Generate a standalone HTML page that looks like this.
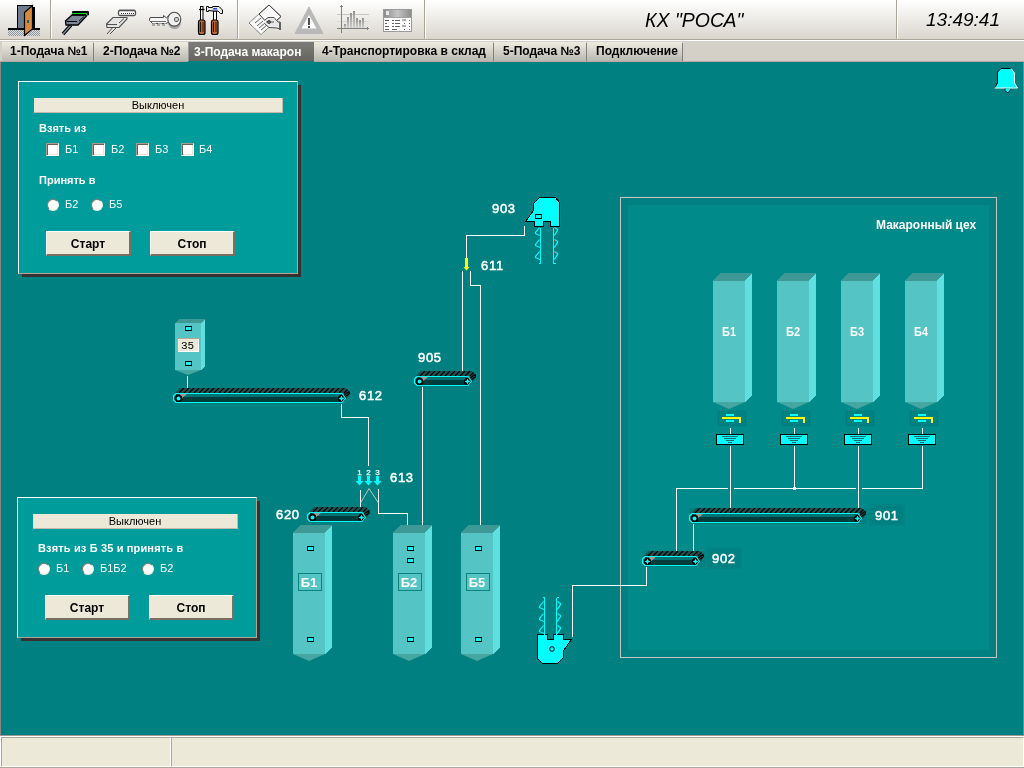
<!DOCTYPE html>
<html><head><meta charset="utf-8">
<style>
*{margin:0;padding:0;box-sizing:border-box}
html,body{width:1024px;height:768px;overflow:hidden;background:#D4D0C8;font-family:"Liberation Sans",sans-serif;position:relative}
.a{position:absolute}
#tb{left:0;top:0;width:1024px;height:39px;background:linear-gradient(#FFFFFF,#DAD6CE)}
.vs{position:absolute;top:0;width:1px;height:39px;background:#A8A496}
.vw{position:absolute;top:0;width:1px;height:39px;background:#FFFFFF}
#tl1{left:0;top:39px;width:1024px;height:1px;background:#ACA899}
#tl2{left:0;top:40px;width:1024px;height:1px;background:#FFFFFF}
#tabs{left:0;top:41px;width:1024px;height:21px;background:#D4D0C8}
.tab{position:absolute;top:42px;height:19px;background:linear-gradient(#EFECDF,#B9B8B1);font-weight:bold;font-size:12px;color:#000;line-height:19px;white-space:nowrap}
.tsep{position:absolute;top:43px;width:1px;height:18px;background:#808080}
#main{left:0;top:62px;width:1024px;height:674px;background:#008080}
.pnl{position:absolute;background:#009B9B;border-top:1px solid #fff;border-left:1px solid #fff;border-right:1px solid #B0A494;border-bottom:1px solid #B0A494}
.shr{position:absolute;background:#363232}
.stat{position:absolute;background:#ECE9D8;font-size:11px;text-align:center;color:#000;line-height:15px;border-right:1px solid #C8B8B0;border-bottom:1px solid #C8B8B0}
.lbl{position:absolute;color:#fff;font-size:11px;font-weight:bold;white-space:nowrap}
.lt{position:absolute;color:#fff;font-size:11px;white-space:nowrap}
.cb{position:absolute;width:13px;height:13px;background:#fff;border-top:1px solid #A89C90;border-left:1px solid #A89C90;border-right:1px solid #FFFFFF;border-bottom:1px solid #FFFFFF;box-shadow:inset 1px 1px 0 #6C6054,inset -1px -1px 0 #ECE9D8}
.rb{position:absolute;width:12px;height:12px;border-radius:50%;background:#fff;border:1px solid #8A7C70;border-right-color:#F0ECE0;border-bottom-color:#F0ECE0}
.btn{position:absolute;background:#ECE9D8;border-top:1px solid #fff;border-left:1px solid #fff;border-right:2px solid #7A7062;border-bottom:2px solid #7A7062;font-size:12px;font-weight:bold;text-align:center;color:#000}
#sb{left:0;top:735px;width:1024px;height:33px;background:#ECE9D8}
</style></head><body><div id="wrap" style="position:absolute;left:0;top:0;width:1024px;height:768px;will-change:transform">
<div id="tb" class="a"></div>
<div class="vs" style="left:50px"></div><div class="vw" style="left:51px"></div>
<div class="vs" style="left:237px"></div><div class="vw" style="left:238px"></div>
<div class="vs" style="left:424px"></div><div class="vw" style="left:425px"></div>
<div class="vs" style="left:896px"></div><div class="vw" style="left:897px"></div>
<div class="a" style="left:645px;top:9px;font-size:19.5px;font-style:italic;color:#000;white-space:nowrap">КХ "РОСА"</div>
<div class="a" style="left:926px;top:9px;font-size:19px;font-style:italic;color:#000;white-space:nowrap">13:49:41</div>
<!-- icons -->
<svg class="a" style="left:0;top:0" width="430" height="40" shape-rendering="crispEdges">
<rect x="17.5" y="5.5" width="15" height="23" fill="#6E7C8C" stroke="#000" stroke-width="1"/>
<rect x="33" y="7" width="2" height="22" fill="#000"/>
<rect x="8" y="28" width="32" height="2" fill="#000"/>
<pattern id="dith" width="2" height="2" patternUnits="userSpaceOnUse"><rect width="1" height="1" fill="#8C98A4"/><rect x="1" y="1" width="1" height="1" fill="#8C98A4"/></pattern>
<rect x="8" y="30" width="32" height="6" fill="url(#dith)"/>
<polygon points="24.5,12.5 32.5,5.5 32.5,29 24.5,35.5" fill="#D88A40" stroke="#000" stroke-width="1.2" shape-rendering="geometricPrecision"/>
<rect x="27" y="20" width="2" height="3" fill="#206060"/>
<g shape-rendering="geometricPrecision">
<path d="M63,34 L71,25" stroke="#000" stroke-width="3.4"/><path d="M63,34 L71,25" stroke="#7A8898" stroke-width="1.4"/>
<polygon points="65.5,21 72,15 86.5,15 86.5,16 78,25 66,25" fill="#7A8898" stroke="#000" stroke-width="1.3"/>
<path d="M66.5,21.5 L77,21.5" stroke="#000" stroke-width="1"/>
<path d="M79,21 L84,16.5" stroke="#000" stroke-width="0.8"/>
<rect x="72" y="11" width="17" height="4.5" rx="1.2" fill="#000"/>
<path d="M72,13.5 L86,13.5 L87.5,15.5" fill="none" stroke="#00E020" stroke-width="1.2"/>
</g>
<g shape-rendering="geometricPrecision" fill="none" stroke="#505050">
<path d="M107,34 L114,26 M110,34 L117,27" stroke-width="1"/>
<polygon points="106.5,24 113,17.5 127,17.5 127,19 119,27.5 107,27.5" fill="#E4E4E4" stroke-width="1.1"/>
<path d="M107,24.5 L117,24.5 M119,23 L124,18.5" stroke-width="1"/>
<rect x="118.5" y="10.5" width="17" height="5" rx="1.5" fill="#fff" stroke-width="1.3"/>
<path d="M119,10.3 L135,10.3" stroke-width="1.2"/>
<rect x="120.5" y="13" width="1" height="1" fill="#404040" stroke="none" shape-rendering="crispEdges"/>
<rect x="122.5" y="13" width="1" height="1" fill="#404040" stroke="none" shape-rendering="crispEdges"/>
<rect x="124.5" y="13" width="1" height="1" fill="#404040" stroke="none" shape-rendering="crispEdges"/>
<rect x="126.5" y="13" width="1" height="1" fill="#404040" stroke="none" shape-rendering="crispEdges"/>
<rect x="128.5" y="13" width="1" height="1" fill="#404040" stroke="none" shape-rendering="crispEdges"/>
<rect x="130.5" y="13" width="1" height="1" fill="#404040" stroke="none" shape-rendering="crispEdges"/>
<rect x="132.5" y="13" width="1" height="1" fill="#404040" stroke="none" shape-rendering="crispEdges"/>
</g>
<g shape-rendering="geometricPrecision">
<path d="M152,25 L167,25" stroke="#A8A8A8" stroke-width="2" stroke-dasharray="3,2"/>
<ellipse cx="174.5" cy="22.5" rx="6.5" ry="6.8" fill="#A8A8A8"/>
<path d="M149.5,19 Q149.5,17.5 151,17.5 L163.5,17.5 L163.5,15.5 L166.5,18 L168.5,15.5 L169,22 L166,23.5 L152.5,23.5 L149.5,20.5 Z" fill="#F4F4F4" stroke="#4A4A4A" stroke-width="1"/>
<path d="M150,21.5 L166,21.5" stroke="#4A4A4A" stroke-width="0.8"/>
<path d="M153,23 L156,23 M158,23 L162,23 M164,23 L166,23" stroke="#F8F8F8" stroke-width="1"/>
<ellipse cx="174.3" cy="19.2" rx="6.5" ry="6.9" fill="#F0F0F0" stroke="#4A4A4A" stroke-width="1.1"/>
<rect x="174.6" y="17.6" width="3.8" height="3.8" rx="1" fill="#D8D8D8" stroke="#4A4A4A" stroke-width="1"/>
</g>
<g shape-rendering="geometricPrecision">
<rect x="200.5" y="6.5" width="2.5" height="14" fill="#fff" stroke="#000" stroke-width="1"/>
<path d="M199,9.5 L204.5,9.5" stroke="#000" stroke-width="1.3"/>
<rect x="198.5" y="20" width="6.5" height="14.5" rx="2" fill="#C06438" stroke="#000" stroke-width="1.2"/>
<path d="M200.5,22 L200.5,32 M203,22 L203,32" stroke="#000" stroke-width="0.8"/>
<rect x="213.5" y="11" width="3" height="9.5" fill="#fff" stroke="#000" stroke-width="1"/>
<polygon points="206.5,6.5 208.5,6.5 208.5,7.5 212.5,7.5 212.5,6.5 219,6.5 222.5,10 222.5,13.5 220.5,13.5 218,11 213,11 208.5,10.5 208.5,11.5 206.5,11.5" fill="#E8E8E8" stroke="#000" stroke-width="1"/>
<path d="M213,8.8 L217,8.8" stroke="#1030F0" stroke-width="1.4"/>
<rect x="211.5" y="20" width="6.5" height="14.5" rx="2" fill="#C06438" stroke="#000" stroke-width="1.2"/>
<path d="M213.5,22 L213.5,32 M216,22 L216,32" stroke="#000" stroke-width="0.8"/>
</g>
<g shape-rendering="geometricPrecision" fill="none" stroke="#505050" stroke-width="1">
<polygon points="269,5 281,16.5 261,34.5 249,23" fill="#FAFAFA" stroke="#404040" stroke-dasharray="1,0.6"/>
<path d="M259,14 L269,5 L281,16.5 L272,25" stroke="#404040"/>
<path d="M259,14 L269,25" stroke="#404040"/>
<path d="M255,23 L261,18 M257,26 L263,21 M259,28 L265,23 M261,30 L267,25" stroke="#606060"/>
<path d="M265,20 L268,17.5 L274,17.5 L278,22 L280,22 L280,29 L277,28 L269,27.5 L265,24" fill="#E8E8E8" stroke="#505050"/>
<circle cx="269" cy="22" r="1.6" fill="#707070"/><path d="M266,22 L274,22" stroke="#505050"/>
<rect x="279" y="22" width="2" height="8" fill="#606060" stroke="none"/>
</g>
<polygon points="309,7 323,33.5 295,33.5" fill="#B8B8B8" stroke="#B8B8B8" stroke-width="1" stroke-linejoin="round" shape-rendering="geometricPrecision"/>
<polygon points="309,15 316.5,28.5 301.5,28.5" fill="#fff" shape-rendering="geometricPrecision"/>
<rect x="308" y="18" width="2" height="7" fill="#505050"/><rect x="308" y="26" width="2" height="1.5" fill="#505050"/>
<g>
<rect x="337" y="14" width="32" height="1" fill="#C8C8C4"/><rect x="337" y="21" width="32" height="1" fill="#D8D8D4"/>
<rect x="341" y="6" width="1.2" height="27" fill="#808080"/>
<polygon points="339.5,7 341.6,5 343.7,7" fill="#808080"/>
<rect x="337" y="28" width="31" height="1.2" fill="#808080"/>
<polygon points="367,26.5 369,28.6 367,30.7" fill="#808080"/>
<rect x="344" y="24" width="2" height="4" fill="url(#bar)"/>
<rect x="347" y="17" width="2" height="11" fill="url(#bar)"/>
<rect x="350" y="13" width="2" height="15" fill="url(#bar)"/>
<rect x="353" y="11" width="2" height="17" fill="url(#bar)"/>
<rect x="356" y="18" width="2" height="10" fill="url(#bar)"/>
<rect x="359" y="20" width="2" height="8" fill="url(#bar)"/>
<rect x="362" y="18" width="2" height="10" fill="url(#bar)"/>
<linearGradient id="bar" x1="0" y1="0" x2="0" y2="1"><stop offset="0" stop-color="#909090"/><stop offset="1" stop-color="#D0D0D0"/></linearGradient>
</g>
<rect x="383.5" y="9.5" width="28" height="22" fill="#fff" stroke="#9A9A9A" stroke-width="1"/>
<linearGradient id="hdr" x1="0" y1="0" x2="1" y2="0"><stop offset="0" stop-color="#8C8C8C"/><stop offset="0.5" stop-color="#C4C4C4"/><stop offset="1" stop-color="#8C8C8C"/></linearGradient>
<rect x="384" y="10" width="27" height="8" fill="url(#hdr)"/>
<rect x="384" y="17" width="27" height="1.2" fill="#A0A0A0"/>
<rect x="386" y="11" width="3" height="4" fill="#E8E8E8"/>
<rect x="385" y="20" width="4" height="1" fill="#606060"/>
<rect x="392" y="20" width="2" height="1" fill="#606060"/><rect x="395" y="20" width="5" height="1" fill="#606060"/>
<rect x="409" y="20" width="1" height="1" fill="#606060"/>
<rect x="402" y="19" width="4" height="2" fill="#B0B0B0"/>
<rect x="385" y="23" width="2" height="1" fill="#606060"/>
<rect x="392" y="23" width="2" height="1" fill="#606060"/><rect x="395" y="23" width="5" height="1" fill="#606060"/>
<rect x="409" y="23" width="1" height="1" fill="#606060"/>
<rect x="404" y="23" width="1" height="1" fill="#606060"/>
<rect x="385" y="26" width="4" height="1" fill="#606060"/>
<rect x="392" y="26" width="2" height="1" fill="#606060"/><rect x="395" y="26" width="5" height="1" fill="#606060"/>
<rect x="409" y="26" width="1" height="1" fill="#606060"/>
<rect x="402" y="25" width="4" height="2" fill="#B0B0B0"/>
<rect x="385" y="29" width="4" height="1" fill="#606060"/>
<rect x="392" y="29" width="5" height="1" fill="#606060"/>
<rect x="409" y="29" width="1" height="1" fill="#606060"/>
<rect x="404" y="29" width="1" height="1" fill="#606060"/>
</svg>
<!-- /icons --><div id="tl1" class="a"></div><div id="tl2" class="a"></div>
<div id="tabs" class="a"></div>
<div class="tab" style="left:2px;width:91px;padding-left:8px">1-Подача №1</div>
<div class="tsep" style="left:93px"></div>
<div class="tab" style="left:94px;width:94px;padding-left:9px">2-Подача №2</div>
<div class="tab" style="left:188px;width:126px;height:19px;padding-left:5px;line-height:20px;background:linear-gradient(#7C7C7A,#66655E);color:#fff;border-left:1px solid #9A9A98">3-Подача макарон</div>
<div class="tab" style="left:314px;width:179px;padding-left:8px">4-Транспортировка в склад</div>
<div class="tsep" style="left:493px"></div>
<div class="tab" style="left:494px;width:92px;padding-left:9px">5-Подача №3</div>
<div class="tsep" style="left:586px"></div>
<div class="tab" style="left:587px;width:95px;padding-left:9px">Подключение</div>
<div class="tsep" style="left:682px"></div>
<div class="a" style="left:0;top:61px;width:1024px;height:1px;background:#B8A8A0"></div>
<div id="main" class="a"></div>
<div class="a" style="left:188px;top:61px;width:126px;height:1px;background:#008080"></div>
<div class="a" style="left:0;top:62px;width:1px;height:673px;background:#8C8480"></div>
<div class="a" style="left:1023px;top:62px;width:1px;height:673px;background:#8C8480"></div>

<!-- panel 1 -->
<div class="shr" style="left:298px;top:85px;width:3px;height:192px"></div>
<div class="shr" style="left:22px;top:274px;width:279px;height:3px"></div>
<div class="pnl" style="left:18px;top:81px;width:280px;height:193px"></div>
<div class="stat" style="left:34px;top:98px;width:249px;height:15px">Выключен</div>
<div class="lbl" style="left:39px;top:122px">Взять из</div>
<div class="cb" style="left:46px;top:143px"></div><div class="lt" style="left:65px;top:143px">Б1</div>
<div class="cb" style="left:92px;top:143px"></div><div class="lt" style="left:111px;top:143px">Б2</div>
<div class="cb" style="left:136px;top:143px"></div><div class="lt" style="left:155px;top:143px">Б3</div>
<div class="cb" style="left:181px;top:143px"></div><div class="lt" style="left:199px;top:143px">Б4</div>
<div class="lbl" style="left:39px;top:174px">Принять в</div>
<div class="rb" style="left:47px;top:199px"></div><div class="lt" style="left:65px;top:198px">Б2</div>
<div class="rb" style="left:91px;top:199px"></div><div class="lt" style="left:109px;top:198px">Б5</div>
<div class="btn" style="left:46px;top:231px;width:85px;height:25px;line-height:24px">Старт</div>
<div class="btn" style="left:150px;top:231px;width:85px;height:25px;line-height:24px">Стоп</div>

<!-- panel 2 -->
<div class="shr" style="left:257px;top:501px;width:3px;height:140px"></div>
<div class="shr" style="left:21px;top:638px;width:239px;height:3px"></div>
<div class="pnl" style="left:17px;top:497px;width:240px;height:141px"></div>
<div class="stat" style="left:33px;top:514px;width:205px;height:15px">Выключен</div>
<div class="lbl" style="left:38px;top:542px;letter-spacing:0.15px">Взять из Б 35 и принять в</div>
<div class="rb" style="left:38px;top:563px"></div><div class="lt" style="left:56px;top:562px">Б1</div>
<div class="rb" style="left:82px;top:563px"></div><div class="lt" style="left:100px;top:562px">Б1Б2</div>
<div class="rb" style="left:142px;top:563px"></div><div class="lt" style="left:160px;top:562px">Б2</div>
<div class="btn" style="left:45px;top:595px;width:85px;height:25px;line-height:24px">Старт</div>
<div class="btn" style="left:149px;top:595px;width:85px;height:25px;line-height:24px">Стоп</div>

<!-- status bar -->
<div id="sb" class="a"></div>
<div class="a" style="left:0;top:735px;width:1024px;height:1px;background:#9C9890"></div>
<div class="a" style="left:0;top:736px;width:1024px;height:1px;background:#fff"></div>
<div class="a" style="left:1px;top:737px;width:170px;height:30px;border-top:1px solid #ACA899;border-left:1px solid #ACA899;border-right:1px solid #fff;border-bottom:1px solid #fff"></div>
<div class="a" style="left:171px;top:737px;width:853px;height:30px;border-top:1px solid #ACA899;border-left:1px solid #ACA899;border-right:1px solid #fff;border-bottom:1px solid #fff"></div>
<div class="a" style="left:0;top:767px;width:1024px;height:1px;background:#ACA899"></div>
<div class="a" style="left:0;top:736px;width:1px;height:31px;background:#fff"></div>

<!-- diagram -->
<svg class="a" style="left:0;top:0" width="1024" height="768" viewBox="0 0 1024 768" shape-rendering="crispEdges">
<rect x="628" y="205" width="361" height="445" fill="#008A8A"/>
<rect x="620.5" y="197.5" width="376" height="460" fill="none" stroke="#C4C4C0" stroke-width="1"/>
<path d="M187.5,375.5 L187.5,388.5" fill="none" stroke="#FFFFFF" stroke-width="1"/>
<path d="M341.5,403.5 L341.5,417.5 L368.5,417.5 L368.5,465.5" fill="none" stroke="#FFFFFF" stroke-width="1"/>
<path d="M360.5,489.5 L360.5,507.5" fill="none" stroke="#FFFFFF" stroke-width="1"/>
<path d="M378.5,488.5 L378.5,513.5 L407.5,513.5 L407.5,525.5" fill="none" stroke="#FFFFFF" stroke-width="1"/>
<path d="M360.5,503 L369,488.5 L378.5,503" fill="none" stroke="#C8C4C0" stroke-width="1" shape-rendering="geometricPrecision"/>
<path d="M422.5,386.5 L422.5,525.5" fill="none" stroke="#FFFFFF" stroke-width="1"/>
<path d="M462.5,270.5 L462.5,371.5" fill="none" stroke="#FFFFFF" stroke-width="1"/>
<path d="M470.5,270.5 L470.5,285.5 L480.5,285.5 L480.5,525.5" fill="none" stroke="#FFFFFF" stroke-width="1"/>
<path d="M524.5,225.5 L524.5,235.5 L466.5,235.5 L466.5,258.5" fill="none" stroke="#FFFFFF" stroke-width="1"/>
<path d="M572.5,636.5 L572.5,585.5 L646.5,585.5 L646.5,566.5" fill="none" stroke="#FFFFFF" stroke-width="1"/>
<path d="M676.5,551.5 L676.5,488.5 L727.5,488.5" fill="none" stroke="#FFFFFF" stroke-width="1"/>
<path d="M733.5,488.5 L855.5,488.5" fill="none" stroke="#FFFFFF" stroke-width="1"/>
<path d="M861.5,488.5 L922.5,488.5 L922.5,445.5" fill="none" stroke="#FFFFFF" stroke-width="1"/>
<path d="M794.5,445.5 L794.5,488.5" fill="none" stroke="#FFFFFF" stroke-width="1"/>
<rect x="793" y="487" width="3" height="3" fill="#fff"/>
<path d="M693.5,523.5 L693.5,551.5" fill="none" stroke="#FFFFFF" stroke-width="1"/>
<path d="M730.5,427.5 L730.5,434.5" fill="none" stroke="#FFFFFF" stroke-width="1"/>
<path d="M794.5,427.5 L794.5,434.5" fill="none" stroke="#FFFFFF" stroke-width="1"/>
<path d="M858.5,427.5 L858.5,434.5" fill="none" stroke="#FFFFFF" stroke-width="1"/>
<path d="M922.5,427.5 L922.5,434.5" fill="none" stroke="#FFFFFF" stroke-width="1"/>
<path d="M730.5,445.5 L730.5,508.5" fill="none" stroke="#FFFFFF" stroke-width="1"/>
<path d="M858.5,445.5 L858.5,508.5" fill="none" stroke="#FFFFFF" stroke-width="1"/>
<polygon points="175,323 179,319 205,319 201,323" fill="#3E9896"/>
<rect x="175" y="323" width="26" height="47" fill="#54C4C4"/>
<polygon points="201,323 205,319 205,366 201,370" fill="#5EE0E0"/>
<polygon points="175,370 201,370 188,375" fill="#46A6A2" shape-rendering="geometricPrecision"/>
<rect x="185" y="326" width="7" height="5" fill="#000"/>
<rect x="186" y="327" width="5" height="3" fill="#00FFFF"/>
<rect x="185" y="361" width="7" height="5" fill="#000"/>
<rect x="186" y="362" width="5" height="3" fill="#00FFFF"/>
<rect x="177" y="338" width="22" height="14" fill="#B8A898"/>
<rect x="178" y="339" width="21" height="13" fill="#FFFFFF"/>
<rect x="178" y="339" width="20" height="12" fill="#ECE9D8"/>
<text x="181" y="349" fill="#000" font-family="Liberation Mono" font-size="11" letter-spacing="0" shape-rendering="geometricPrecision">35</text>
<polygon points="293,533 300,525 332,525 325,533" fill="#3E9896"/>
<rect x="293" y="533" width="32" height="121" fill="#54C4C4"/>
<polygon points="325,533 332,525 332,647 325,654" fill="#5EE0E0"/>
<polygon points="293,654 325,654 309,661" fill="#46A6A2" shape-rendering="geometricPrecision"/>
<rect x="307" y="546" width="7" height="5" fill="#000"/>
<rect x="308" y="547" width="5" height="3" fill="#00FFFF"/>
<rect x="307" y="637" width="7" height="5" fill="#000"/>
<rect x="308" y="638" width="5" height="3" fill="#00FFFF"/>
<rect x="298.5" y="573.5" width="23" height="17" fill="none" stroke="#0A827E" stroke-width="1.2"/>
<text x="309" y="587" text-anchor="middle" fill="#fff" font-family="Liberation Sans" font-weight="bold" font-size="13" shape-rendering="geometricPrecision">Б1</text>
<polygon points="393,533 400,525 432,525 425,533" fill="#3E9896"/>
<rect x="393" y="533" width="32" height="121" fill="#54C4C4"/>
<polygon points="425,533 432,525 432,647 425,654" fill="#5EE0E0"/>
<polygon points="393,654 425,654 409,661" fill="#46A6A2" shape-rendering="geometricPrecision"/>
<rect x="407" y="546" width="7" height="5" fill="#000"/>
<rect x="408" y="547" width="5" height="3" fill="#00FFFF"/>
<rect x="407" y="558" width="7" height="5" fill="#000"/>
<rect x="408" y="559" width="5" height="3" fill="#00FFFF"/>
<rect x="407" y="637" width="7" height="5" fill="#000"/>
<rect x="408" y="638" width="5" height="3" fill="#00FFFF"/>
<rect x="398.5" y="573.5" width="23" height="17" fill="none" stroke="#0A827E" stroke-width="1.2"/>
<text x="409" y="587" text-anchor="middle" fill="#fff" font-family="Liberation Sans" font-weight="bold" font-size="13" shape-rendering="geometricPrecision">Б2</text>
<polygon points="461,533 468,525 500,525 493,533" fill="#3E9896"/>
<rect x="461" y="533" width="32" height="121" fill="#54C4C4"/>
<polygon points="493,533 500,525 500,647 493,654" fill="#5EE0E0"/>
<polygon points="461,654 493,654 477,661" fill="#46A6A2" shape-rendering="geometricPrecision"/>
<rect x="475" y="546" width="7" height="5" fill="#000"/>
<rect x="476" y="547" width="5" height="3" fill="#00FFFF"/>
<rect x="475" y="637" width="7" height="5" fill="#000"/>
<rect x="476" y="638" width="5" height="3" fill="#00FFFF"/>
<rect x="466.5" y="573.5" width="23" height="17" fill="none" stroke="#0A827E" stroke-width="1.2"/>
<text x="477" y="587" text-anchor="middle" fill="#fff" font-family="Liberation Sans" font-weight="bold" font-size="13" shape-rendering="geometricPrecision">Б5</text>
<polygon points="713,281 720,273 752,273 745,281" fill="#3E9896"/>
<rect x="713" y="281" width="32" height="121" fill="#54C4C4"/>
<polygon points="745,281 752,273 752,395 745,402" fill="#5EE0E0"/>
<polygon points="713,402 745,402 729,409" fill="#46A6A2" shape-rendering="geometricPrecision"/>
<text x="722" y="336" textLength="14" lengthAdjust="spacingAndGlyphs" fill="#fff" font-family="Liberation Sans" font-weight="bold" font-size="13" shape-rendering="geometricPrecision">Б1</text>
<rect x="717" y="410" width="30" height="17" fill="#008686"/>
<rect x="718.5" y="411.5" width="27" height="14" fill="#008282" stroke="#007C7C" stroke-width="1"/>
<rect x="726" y="414" width="8" height="2" fill="#00FFFF"/>
<rect x="722" y="417" width="19" height="2" fill="#FFFF00"/>
<rect x="739" y="417" width="2" height="6" fill="#FFFF00"/>
<rect x="726" y="420" width="8" height="2" fill="#00FFFF"/>
<rect x="716" y="434" width="28" height="11" fill="#000"/>
<rect x="717" y="435" width="26" height="9" fill="#00FFFF"/>
<rect x="722" y="436" width="16" height="1" fill="#1A6A6A"/>
<rect x="724" y="438" width="12" height="1" fill="#1A6A6A"/>
<rect x="726" y="440" width="8" height="1" fill="#1A6A6A"/>
<rect x="728" y="442" width="4" height="1" fill="#1A6A6A"/>
<polygon points="777,281 784,273 816,273 809,281" fill="#3E9896"/>
<rect x="777" y="281" width="32" height="121" fill="#54C4C4"/>
<polygon points="809,281 816,273 816,395 809,402" fill="#5EE0E0"/>
<polygon points="777,402 809,402 793,409" fill="#46A6A2" shape-rendering="geometricPrecision"/>
<text x="786" y="336" textLength="14" lengthAdjust="spacingAndGlyphs" fill="#fff" font-family="Liberation Sans" font-weight="bold" font-size="13" shape-rendering="geometricPrecision">Б2</text>
<rect x="781" y="410" width="30" height="17" fill="#008686"/>
<rect x="782.5" y="411.5" width="27" height="14" fill="#008282" stroke="#007C7C" stroke-width="1"/>
<rect x="790" y="414" width="8" height="2" fill="#00FFFF"/>
<rect x="786" y="417" width="19" height="2" fill="#FFFF00"/>
<rect x="803" y="417" width="2" height="6" fill="#FFFF00"/>
<rect x="790" y="420" width="8" height="2" fill="#00FFFF"/>
<rect x="780" y="434" width="28" height="11" fill="#000"/>
<rect x="781" y="435" width="26" height="9" fill="#00FFFF"/>
<rect x="786" y="436" width="16" height="1" fill="#1A6A6A"/>
<rect x="788" y="438" width="12" height="1" fill="#1A6A6A"/>
<rect x="790" y="440" width="8" height="1" fill="#1A6A6A"/>
<rect x="792" y="442" width="4" height="1" fill="#1A6A6A"/>
<polygon points="841,281 848,273 880,273 873,281" fill="#3E9896"/>
<rect x="841" y="281" width="32" height="121" fill="#54C4C4"/>
<polygon points="873,281 880,273 880,395 873,402" fill="#5EE0E0"/>
<polygon points="841,402 873,402 857,409" fill="#46A6A2" shape-rendering="geometricPrecision"/>
<text x="850" y="336" textLength="14" lengthAdjust="spacingAndGlyphs" fill="#fff" font-family="Liberation Sans" font-weight="bold" font-size="13" shape-rendering="geometricPrecision">Б3</text>
<rect x="845" y="410" width="30" height="17" fill="#008686"/>
<rect x="846.5" y="411.5" width="27" height="14" fill="#008282" stroke="#007C7C" stroke-width="1"/>
<rect x="854" y="414" width="8" height="2" fill="#00FFFF"/>
<rect x="850" y="417" width="19" height="2" fill="#FFFF00"/>
<rect x="867" y="417" width="2" height="6" fill="#FFFF00"/>
<rect x="854" y="420" width="8" height="2" fill="#00FFFF"/>
<rect x="844" y="434" width="28" height="11" fill="#000"/>
<rect x="845" y="435" width="26" height="9" fill="#00FFFF"/>
<rect x="850" y="436" width="16" height="1" fill="#1A6A6A"/>
<rect x="852" y="438" width="12" height="1" fill="#1A6A6A"/>
<rect x="854" y="440" width="8" height="1" fill="#1A6A6A"/>
<rect x="856" y="442" width="4" height="1" fill="#1A6A6A"/>
<polygon points="905,281 912,273 944,273 937,281" fill="#3E9896"/>
<rect x="905" y="281" width="32" height="121" fill="#54C4C4"/>
<polygon points="937,281 944,273 944,395 937,402" fill="#5EE0E0"/>
<polygon points="905,402 937,402 921,409" fill="#46A6A2" shape-rendering="geometricPrecision"/>
<text x="914" y="336" textLength="14" lengthAdjust="spacingAndGlyphs" fill="#fff" font-family="Liberation Sans" font-weight="bold" font-size="13" shape-rendering="geometricPrecision">Б4</text>
<rect x="909" y="410" width="30" height="17" fill="#008686"/>
<rect x="910.5" y="411.5" width="27" height="14" fill="#008282" stroke="#007C7C" stroke-width="1"/>
<rect x="918" y="414" width="8" height="2" fill="#00FFFF"/>
<rect x="914" y="417" width="19" height="2" fill="#FFFF00"/>
<rect x="931" y="417" width="2" height="6" fill="#FFFF00"/>
<rect x="918" y="420" width="8" height="2" fill="#00FFFF"/>
<rect x="908" y="434" width="28" height="11" fill="#000"/>
<rect x="909" y="435" width="26" height="9" fill="#00FFFF"/>
<rect x="914" y="436" width="16" height="1" fill="#1A6A6A"/>
<rect x="916" y="438" width="12" height="1" fill="#1A6A6A"/>
<rect x="918" y="440" width="8" height="1" fill="#1A6A6A"/>
<rect x="920" y="442" width="4" height="1" fill="#1A6A6A"/>
<rect x="689" y="508" width="178" height="16" fill="#008080"/>
<rect x="642" y="551" width="63" height="16" fill="#008080"/>
<rect x="869" y="504" width="36" height="22" fill="#008484"/>
<rect x="871" y="506" width="32" height="18" fill="#008080"/>
<rect x="706" y="547" width="36" height="22" fill="#008484"/>
<rect x="708" y="549" width="32" height="18" fill="#008080"/>
<polygon points="175,393 180,388 346,388 350,392 350,394 344,401 344,393" fill="#1D5050" shape-rendering="geometricPrecision"/>
<clipPath id="c178_398"><polygon points="175,393 180,388 346,388 350,392 350,394 344,401 344,393"/></clipPath>
<path d="M179,393 L184,388 M184,393 L189,388 M189,393 L194,388 M194,393 L199,388 M199,393 L204,388 M204,393 L209,388 M209,393 L214,388 M214,393 L219,388 M219,393 L224,388 M224,393 L229,388 M229,393 L234,388 M234,393 L239,388 M239,393 L244,388 M244,393 L249,388 M249,393 L254,388 M254,393 L259,388 M259,393 L264,388 M264,393 L269,388 M269,393 L274,388 M274,393 L279,388 M279,393 L284,388 M284,393 L289,388 M289,393 L294,388 M294,393 L299,388 M299,393 L304,388 M304,393 L309,388 M309,393 L314,388 M314,393 L319,388 M319,393 L324,388 M324,393 L329,388 M329,393 L334,388 M334,393 L339,388 M339,393 L344,388 M344,393 L349,388 M349,393 L354,388 M344,395.0 L350,391.0 M344,397.5 L350,393.5 M344,400.0 L350,396.0" stroke="#000" stroke-width="1.1" clip-path="url(#c178_398)" shape-rendering="geometricPrecision"/>
<rect x="176" y="393" width="167" height="9" fill="#003C3C"/>
<rect x="178" y="394" width="163" height="3" fill="#007272"/>
<polygon points="180,394 187,394 181,399" fill="#9E9896" shape-rendering="geometricPrecision"/>
<circle cx="178.5" cy="398.5" r="2.9" fill="#00FFFF" stroke="#000" stroke-width="1.8" shape-rendering="geometricPrecision"/>
<circle cx="341.5" cy="398.5" r="3.6" fill="#000" shape-rendering="geometricPrecision"/>
<path d="M341.5,395.5 L342.4,397.6 L344.5,398.5 L342.4,399.4 L341.5,401.5 L340.6,399.4 L338.5,398.5 L340.6,397.6 Z" fill="#00FFFF" shape-rendering="geometricPrecision"/>
<path d="M176,393.5 L342,393.5 L345.5,398.5 L342,402.5 L176,402.5 L173.5,400 L173.5,396 Z" fill="none" stroke="#00FFFF" stroke-width="1.1" shape-rendering="geometricPrecision"/>
<polygon points="309,512 314,507 366,507 370,511 370,513 364,520 364,512" fill="#1D5050" shape-rendering="geometricPrecision"/>
<clipPath id="c312_517"><polygon points="309,512 314,507 366,507 370,511 370,513 364,520 364,512"/></clipPath>
<path d="M313,512 L318,507 M318,512 L323,507 M323,512 L328,507 M328,512 L333,507 M333,512 L338,507 M338,512 L343,507 M343,512 L348,507 M348,512 L353,507 M353,512 L358,507 M358,512 L363,507 M363,512 L368,507 M368,512 L373,507 M364,514.0 L370,510.0 M364,516.5 L370,512.5 M364,519.0 L370,515.0" stroke="#000" stroke-width="1.1" clip-path="url(#c312_517)" shape-rendering="geometricPrecision"/>
<rect x="310" y="512" width="53" height="9" fill="#003C3C"/>
<rect x="312" y="513" width="49" height="3" fill="#007272"/>
<polygon points="314,513 321,513 315,518" fill="#9E9896" shape-rendering="geometricPrecision"/>
<circle cx="312.5" cy="517.5" r="2.9" fill="#00FFFF" stroke="#000" stroke-width="1.8" shape-rendering="geometricPrecision"/>
<circle cx="361.5" cy="517.5" r="3.6" fill="#000" shape-rendering="geometricPrecision"/>
<path d="M361.5,514.5 L362.4,516.6 L364.5,517.5 L362.4,518.4 L361.5,520.5 L360.6,518.4 L358.5,517.5 L360.6,516.6 Z" fill="#00FFFF" shape-rendering="geometricPrecision"/>
<path d="M310,512.5 L362,512.5 L365.5,517.5 L362,521.5 L310,521.5 L307.5,519 L307.5,515 Z" fill="none" stroke="#00FFFF" stroke-width="1.1" shape-rendering="geometricPrecision"/>
<polygon points="416,376 421,371 472,371 476,375 476,377 470,384 470,376" fill="#1D5050" shape-rendering="geometricPrecision"/>
<clipPath id="c419_381"><polygon points="416,376 421,371 472,371 476,375 476,377 470,384 470,376"/></clipPath>
<path d="M420,376 L425,371 M425,376 L430,371 M430,376 L435,371 M435,376 L440,371 M440,376 L445,371 M445,376 L450,371 M450,376 L455,371 M455,376 L460,371 M460,376 L465,371 M465,376 L470,371 M470,376 L475,371 M475,376 L480,371 M470,378.0 L476,374.0 M470,380.5 L476,376.5 M470,383.0 L476,379.0" stroke="#000" stroke-width="1.1" clip-path="url(#c419_381)" shape-rendering="geometricPrecision"/>
<rect x="417" y="376" width="52" height="9" fill="#003C3C"/>
<rect x="419" y="377" width="48" height="3" fill="#007272"/>
<polygon points="421,377 428,377 422,382" fill="#9E9896" shape-rendering="geometricPrecision"/>
<circle cx="419.5" cy="381.5" r="2.9" fill="#00FFFF" stroke="#000" stroke-width="1.8" shape-rendering="geometricPrecision"/>
<circle cx="467.5" cy="381.5" r="3.6" fill="#000" shape-rendering="geometricPrecision"/>
<path d="M467.5,378.5 L468.4,380.6 L470.5,381.5 L468.4,382.4 L467.5,384.5 L466.6,382.4 L464.5,381.5 L466.6,380.6 Z" fill="#00FFFF" shape-rendering="geometricPrecision"/>
<path d="M417,376.5 L468,376.5 L471.5,381.5 L468,385.5 L417,385.5 L414.5,383 L414.5,379 Z" fill="none" stroke="#00FFFF" stroke-width="1.1" shape-rendering="geometricPrecision"/>
<polygon points="691,513 696,508 862,508 866,512 866,514 860,521 860,513" fill="#1D5050" shape-rendering="geometricPrecision"/>
<clipPath id="c694_518"><polygon points="691,513 696,508 862,508 866,512 866,514 860,521 860,513"/></clipPath>
<path d="M695,513 L700,508 M700,513 L705,508 M705,513 L710,508 M710,513 L715,508 M715,513 L720,508 M720,513 L725,508 M725,513 L730,508 M730,513 L735,508 M735,513 L740,508 M740,513 L745,508 M745,513 L750,508 M750,513 L755,508 M755,513 L760,508 M760,513 L765,508 M765,513 L770,508 M770,513 L775,508 M775,513 L780,508 M780,513 L785,508 M785,513 L790,508 M790,513 L795,508 M795,513 L800,508 M800,513 L805,508 M805,513 L810,508 M810,513 L815,508 M815,513 L820,508 M820,513 L825,508 M825,513 L830,508 M830,513 L835,508 M835,513 L840,508 M840,513 L845,508 M845,513 L850,508 M850,513 L855,508 M855,513 L860,508 M860,513 L865,508 M865,513 L870,508 M860,515.0 L866,511.0 M860,517.5 L866,513.5 M860,520.0 L866,516.0" stroke="#000" stroke-width="1.1" clip-path="url(#c694_518)" shape-rendering="geometricPrecision"/>
<rect x="692" y="513" width="167" height="9" fill="#003C3C"/>
<rect x="694" y="514" width="163" height="3" fill="#007272"/>
<polygon points="696,514 703,514 697,519" fill="#9E9896" shape-rendering="geometricPrecision"/>
<circle cx="694.5" cy="518.5" r="2.9" fill="#00FFFF" stroke="#000" stroke-width="1.8" shape-rendering="geometricPrecision"/>
<circle cx="857.5" cy="518.5" r="3.6" fill="#000" shape-rendering="geometricPrecision"/>
<path d="M857.5,515.5 L858.4,517.6 L860.5,518.5 L858.4,519.4 L857.5,521.5 L856.6,519.4 L854.5,518.5 L856.6,517.6 Z" fill="#00FFFF" shape-rendering="geometricPrecision"/>
<path d="M692,513.5 L858,513.5 L861.5,518.5 L858,522.5 L692,522.5 L689.5,520 L689.5,516 Z" fill="none" stroke="#00FFFF" stroke-width="1.1" shape-rendering="geometricPrecision"/>
<polygon points="644,556 649,551 700,551 704,555 704,557 698,564 698,556" fill="#1D5050" shape-rendering="geometricPrecision"/>
<clipPath id="c647_561"><polygon points="644,556 649,551 700,551 704,555 704,557 698,564 698,556"/></clipPath>
<path d="M648,556 L653,551 M653,556 L658,551 M658,556 L663,551 M663,556 L668,551 M668,556 L673,551 M673,556 L678,551 M678,556 L683,551 M683,556 L688,551 M688,556 L693,551 M693,556 L698,551 M698,556 L703,551 M703,556 L708,551 M698,558.0 L704,554.0 M698,560.5 L704,556.5 M698,563.0 L704,559.0" stroke="#000" stroke-width="1.1" clip-path="url(#c647_561)" shape-rendering="geometricPrecision"/>
<rect x="645" y="556" width="52" height="9" fill="#003C3C"/>
<rect x="647" y="557" width="48" height="3" fill="#007272"/>
<polygon points="649,557 656,557 650,562" fill="#9E9896" shape-rendering="geometricPrecision"/>
<circle cx="695.5" cy="561.5" r="3.6" fill="#000" shape-rendering="geometricPrecision"/>
<path d="M695.5,558.5 L696.4,560.6 L698.5,561.5 L696.4,562.4 L695.5,564.5 L694.6,562.4 L692.5,561.5 L694.6,560.6 Z" fill="#00FFFF" shape-rendering="geometricPrecision"/>
<circle cx="647.5" cy="561.5" r="3.6" fill="#000" shape-rendering="geometricPrecision"/>
<path d="M647.5,558.5 L648.4,560.6 L650.5,561.5 L648.4,562.4 L647.5,564.5 L646.6,562.4 L644.5,561.5 L646.6,560.6 Z" fill="#00FFFF" shape-rendering="geometricPrecision"/>
<path d="M645,556.5 L696,556.5 L699.5,561.5 L696,565.5 L645,565.5 L642.5,563 L642.5,559 Z" fill="none" stroke="#00FFFF" stroke-width="1.1" shape-rendering="geometricPrecision"/>
<text x="359" y="400" fill="#fff" font-family="Liberation Sans" font-size="13" letter-spacing="0.7" stroke="#fff" stroke-width="0.5" shape-rendering="geometricPrecision">612</text>
<text x="276" y="519" fill="#fff" font-family="Liberation Sans" font-size="13" letter-spacing="0.7" stroke="#fff" stroke-width="0.5" shape-rendering="geometricPrecision">620</text>
<text x="390" y="482" fill="#fff" font-family="Liberation Sans" font-size="13" letter-spacing="0.7" stroke="#fff" stroke-width="0.5" shape-rendering="geometricPrecision">613</text>
<text x="418" y="362" fill="#fff" font-family="Liberation Sans" font-size="13" letter-spacing="0.7" stroke="#fff" stroke-width="0.5" shape-rendering="geometricPrecision">905</text>
<text x="492" y="213" fill="#fff" font-family="Liberation Sans" font-size="13" letter-spacing="0.7" stroke="#fff" stroke-width="0.5" shape-rendering="geometricPrecision">903</text>
<text x="481" y="270" fill="#fff" font-family="Liberation Sans" font-size="13" letter-spacing="0.7" stroke="#fff" stroke-width="0.5" shape-rendering="geometricPrecision">611</text>
<text x="875" y="520" fill="#fff" font-family="Liberation Sans" font-size="13" letter-spacing="0.7" stroke="#fff" stroke-width="0.5" shape-rendering="geometricPrecision">901</text>
<text x="712" y="563" fill="#fff" font-family="Liberation Sans" font-size="13" letter-spacing="0.7" stroke="#fff" stroke-width="0.5" shape-rendering="geometricPrecision">902</text>
<text x="876" y="229" fill="#fff" font-family="Liberation Sans" font-weight="bold" font-size="12" shape-rendering="geometricPrecision">Макаронный цех</text>
<text x="359.5" y="475" text-anchor="middle" fill="#fff" stroke="#fff" stroke-width="0.25" font-family="Liberation Sans" font-size="8" shape-rendering="geometricPrecision">1</text>
<rect x="358" y="476" width="3" height="5" fill="#00FFFF"/>
<polygon points="355.5,481 363.5,481 359.5,485.5" fill="#00FFFF" shape-rendering="geometricPrecision"/>
<text x="368.5" y="475" text-anchor="middle" fill="#fff" stroke="#fff" stroke-width="0.25" font-family="Liberation Sans" font-size="8" shape-rendering="geometricPrecision">2</text>
<rect x="367" y="476" width="3" height="5" fill="#00FFFF"/>
<polygon points="364.5,481 372.5,481 368.5,485.5" fill="#00FFFF" shape-rendering="geometricPrecision"/>
<text x="377.5" y="475" text-anchor="middle" fill="#fff" stroke="#fff" stroke-width="0.25" font-family="Liberation Sans" font-size="8" shape-rendering="geometricPrecision">3</text>
<rect x="376" y="476" width="3" height="5" fill="#00FFFF"/>
<polygon points="373.5,481 381.5,481 377.5,485.5" fill="#00FFFF" shape-rendering="geometricPrecision"/>
<rect x="465" y="258" width="3" height="9" fill="#FFFF00"/>
<polygon points="463.5,267 469.5,267 466.5,270.5" fill="#FFFF00" shape-rendering="geometricPrecision"/>
<polygon points="539.5,197.5 555.5,197.5 559.5,202.5 559.5,226.5 550.5,226.5 550.5,221.5 543.5,221.5 543.5,226.5 534.5,226.5 534.5,221.5 525.5,221.5 533.5,210.5 533.5,203.5" fill="#00FFFF" stroke="#000" stroke-width="1"/>
<rect x="535.5" y="214.5" width="6" height="4" fill="#00FFFF" stroke="#000" stroke-width="1"/>
<path d="M540.5,227.5 L540.5,263.5" fill="none" stroke="#00FFFF" stroke-width="1"/>
<path d="M539.5,227.5 L535.5,232.5 L535.5,233.5 L537.5,234.5 L540.5,235.5" fill="none" stroke="#00FFFF" stroke-width="1.2" shape-rendering="geometricPrecision"/>
<rect x="539" y="234" width="1" height="1" fill="#C04040"/>
<path d="M539.5,239.5 L535.5,244.5 L535.5,245.5 L537.5,246.5 L540.5,247.5" fill="none" stroke="#00FFFF" stroke-width="1.2" shape-rendering="geometricPrecision"/>
<rect x="539" y="246" width="1" height="1" fill="#C04040"/>
<path d="M539.5,251.5 L535.5,256.5 L535.5,257.5 L537.5,258.5 L540.5,259.5" fill="none" stroke="#00FFFF" stroke-width="1.2" shape-rendering="geometricPrecision"/>
<rect x="539" y="258" width="1" height="1" fill="#C04040"/>
<path d="M553.5,227.5 L553.5,263.5" fill="none" stroke="#00FFFF" stroke-width="1"/>
<path d="M554.5,227.5 L557.5,229.5 L557.5,230.5 L555,234.5 L553.5,235.5" fill="none" stroke="#00FFFF" stroke-width="1.2" shape-rendering="geometricPrecision"/>
<rect x="554" y="228" width="1" height="1" fill="#C04040"/>
<path d="M554.5,239.5 L557.5,241.5 L557.5,242.5 L555,246.5 L553.5,247.5" fill="none" stroke="#00FFFF" stroke-width="1.2" shape-rendering="geometricPrecision"/>
<rect x="554" y="240" width="1" height="1" fill="#C04040"/>
<path d="M554.5,251.5 L557.5,253.5 L557.5,254.5 L555,258.5 L553.5,259.5" fill="none" stroke="#00FFFF" stroke-width="1.2" shape-rendering="geometricPrecision"/>
<rect x="554" y="252" width="1" height="1" fill="#C04040"/>
<path d="M538.5,263.5 L540.5,263.5" fill="none" stroke="#00FFFF" stroke-width="1"/>
<path d="M553.5,263.5 L555.5,263.5" fill="none" stroke="#00FFFF" stroke-width="1"/>
<polygon points="537.5,634.5 547.5,634.5 547.5,639.5 553.5,639.5 553.5,634.5 563.5,634.5 563.5,639.5 571.5,639.5 563.5,650.5 563.5,657.5 557.5,663.5 542.5,663.5 537.5,658.5" fill="#00FFFF" stroke="#000" stroke-width="1"/>
<circle cx="552" cy="649" r="2.3" fill="none" stroke="#000" stroke-width="1" shape-rendering="geometricPrecision"/>
<path d="M544.5,597.5 L544.5,634.5" fill="none" stroke="#00FFFF" stroke-width="1"/>
<path d="M543.5,601.5 L539.5,606.5 L539.5,607.5 L541.5,608.5 L544.5,609.5" fill="none" stroke="#00FFFF" stroke-width="1.2" shape-rendering="geometricPrecision"/>
<rect x="543" y="608" width="1" height="1" fill="#C04040"/>
<path d="M543.5,613.5 L539.5,618.5 L539.5,619.5 L541.5,620.5 L544.5,621.5" fill="none" stroke="#00FFFF" stroke-width="1.2" shape-rendering="geometricPrecision"/>
<rect x="543" y="620" width="1" height="1" fill="#C04040"/>
<path d="M543.5,625.5 L539.5,630.5 L539.5,631.5 L541.5,632.5 L544.5,633.5" fill="none" stroke="#00FFFF" stroke-width="1.2" shape-rendering="geometricPrecision"/>
<rect x="543" y="632" width="1" height="1" fill="#C04040"/>
<path d="M556.5,597.5 L556.5,634.5" fill="none" stroke="#00FFFF" stroke-width="1"/>
<path d="M557.5,601.5 L560.5,603.5 L560.5,604.5 L558,608.5 L556.5,609.5" fill="none" stroke="#00FFFF" stroke-width="1.2" shape-rendering="geometricPrecision"/>
<rect x="557" y="602" width="1" height="1" fill="#C04040"/>
<path d="M557.5,613.5 L560.5,615.5 L560.5,616.5 L558,620.5 L556.5,621.5" fill="none" stroke="#00FFFF" stroke-width="1.2" shape-rendering="geometricPrecision"/>
<rect x="557" y="614" width="1" height="1" fill="#C04040"/>
<path d="M557.5,625.5 L560.5,627.5 L560.5,628.5 L558,632.5 L556.5,633.5" fill="none" stroke="#00FFFF" stroke-width="1.2" shape-rendering="geometricPrecision"/>
<rect x="557" y="626" width="1" height="1" fill="#C04040"/>
<path d="M542.5,597.5 L544.5,597.5" fill="none" stroke="#00FFFF" stroke-width="1"/>
<path d="M556.5,597.5 L558.5,597.5" fill="none" stroke="#00FFFF" stroke-width="1"/>
<path d="M1001,68.5 L1011,68.5 L1014.5,73 L1014.5,83 L1017.5,88 L994.5,88 L997.5,83 L997.5,72 Z" fill="#00FFFF" shape-rendering="geometricPrecision"/>
<path d="M994.5,88 L997.5,83 L997.5,72 L1001,68.5 L1011,68.5" fill="none" stroke="#000" stroke-width="1" shape-rendering="geometricPrecision"/>
<path d="M1011,68.5 L1014.5,73 L1014.5,83 L1017.5,88 L994.5,88" fill="none" stroke="#fff" stroke-width="1" shape-rendering="geometricPrecision"/>
<path d="M1005,88.5 L1005,90.5 L1008,93 L1011,89" fill="#00FFFF" stroke="#000" stroke-width="0.8" shape-rendering="geometricPrecision"/>
</svg>
</div></body></html>
